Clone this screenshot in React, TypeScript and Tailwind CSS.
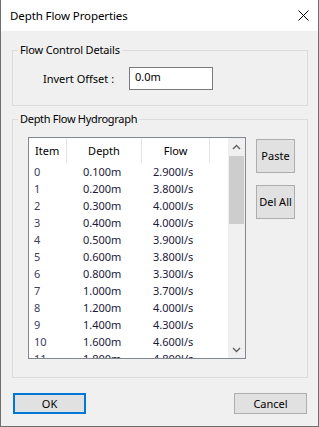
import React from "react";

const rows: [string, string, string][] = [
  ["0", "0.100m", "2.900l/s"],
  ["1", "0.200m", "3.800l/s"],
  ["2", "0.300m", "4.000l/s"],
  ["3", "0.400m", "4.000l/s"],
  ["4", "0.500m", "3.900l/s"],
  ["5", "0.600m", "3.800l/s"],
  ["6", "0.800m", "3.300l/s"],
  ["7", "1.000m", "3.700l/s"],
  ["8", "1.200m", "4.000l/s"],
  ["9", "1.400m", "4.300l/s"],
  ["10", "1.600m", "4.600l/s"],
  ["11", "1.800m", "4.800l/s"],
];

export default function App() {
  return (
    <div
      className="w-[319px] h-[427px] flex flex-col border-l border-r border-b border-[#6f6f6f] bg-[#f0f0f0] text-[11px] leading-[16px] text-black overflow-hidden"
      style={{ fontFamily: '"Noto Sans", "Segoe UI", sans-serif' }}
    >
      {/* Title bar */}
      <div className="h-[31px] shrink-0 bg-white flex items-center justify-between pl-[9px] pr-[9px]">
        <span className="text-[11.5px] tracking-[-0.1px]">Depth Flow Properties</span>
        <svg width="11" height="11" viewBox="0 0 11 11" className="text-black">
          <path d="M0.5 0.5 L10.5 10.5 M10.5 0.5 L0.5 10.5" stroke="currentColor" strokeWidth="1" />
        </svg>
      </div>

      {/* Body */}
      <div className="flex-1 flex flex-col pl-[11px] pr-[10px] pt-[11px]">
        <fieldset className="h-[64px] border border-[#dcdcdc] px-0">
          <legend className="ml-[5px] px-[2px] leading-[16px] tracking-[-0.15px]">Flow Control Details</legend>
          <div className="flex items-start mt-[9px]">
            <span className="ml-[30px] mt-[4px] w-[86px]">Invert Offset :</span>
            <div className="w-[84px] h-[23px] bg-white border border-[#7a7a7a] pl-[5px] pt-[1px]">0.0m</div>
          </div>
        </fieldset>

        <fieldset className="mt-[5px] h-[267px] border border-[#dcdcdc] px-0">
          <legend className="ml-[5px] px-[2px] leading-[16px] tracking-[-0.3px]">Depth Flow Hydrograph</legend>
          <div className="flex items-start mt-[10px] pl-[15px]">
            {/* List view */}
            <div className="w-[218px] h-[222px] border border-[#828790] bg-white flex overflow-hidden">
              <div className="w-[199px] flex flex-col overflow-hidden">
                <div className="h-[25px] shrink-0 grid grid-cols-[38px_75px_68px_18px] items-center">
                  <div className="h-full flex items-center pl-[6px] border-r border-[#e5e5e5]">Item</div>
                  <div className="h-full flex items-center justify-center border-r border-[#e5e5e5]">Depth</div>
                  <div className="h-full flex items-center justify-center border-r border-[#e5e5e5]">Flow</div>
                  <div />
                </div>
                {rows.map(([i, d, f]) => (
                  <div key={i} className="h-[17px] shrink-0 grid grid-cols-[38px_75px_68px] items-center text-[#1a1a3a]">
                    <div className="pl-[5px] text-[#3c3c5c]">{i}</div>
                    <div className="pl-[16px]">{d}</div>
                    <div className="pl-[11px]">{f}</div>
                  </div>
                ))}
              </div>
              {/* Scrollbar */}
              <div className="w-[17px] h-full bg-[#f0f0f0] flex flex-col">
                <div className="h-[18px] shrink-0 flex items-center justify-center">
                  <svg width="9" height="6" viewBox="0 0 9 6">
                    <path d="M1 5 L4.5 1.5 L8 5" stroke="#606060" strokeWidth="1.4" fill="none" />
                  </svg>
                </div>
                <div className="h-[68px] shrink-0 bg-[#cdcdcd] mx-[1px]" />
                <div className="flex-1" />
                <div className="h-[17px] shrink-0 flex items-center justify-center">
                  <svg width="9" height="6" viewBox="0 0 9 6">
                    <path d="M1 1 L4.5 4.5 L8 1" stroke="#606060" strokeWidth="1.4" fill="none" />
                  </svg>
                </div>
              </div>
            </div>
            {/* Buttons */}
            <div className="ml-[10px] mt-[2px] flex flex-col gap-[12px]">
              <div className="w-[39px] h-[34px] bg-[#e1e1e1] border border-[#adadad] flex items-center justify-center">Paste</div>
              <div className="w-[39px] h-[34px] bg-[#e1e1e1] border border-[#adadad] flex items-center justify-center">Del All</div>
            </div>
          </div>
        </fieldset>

        <div className="flex justify-between mt-[15px] pl-[1px] pr-[1px]">
          <div className="w-[73px] h-[21px] bg-[#e1e1e1] border-2 border-[#0078d7] flex items-center justify-center">OK</div>
          <div className="w-[73px] h-[21px] bg-[#e1e1e1] border border-[#adadad] flex items-center justify-center">Cancel</div>
        </div>
      </div>
    </div>
  );
}
